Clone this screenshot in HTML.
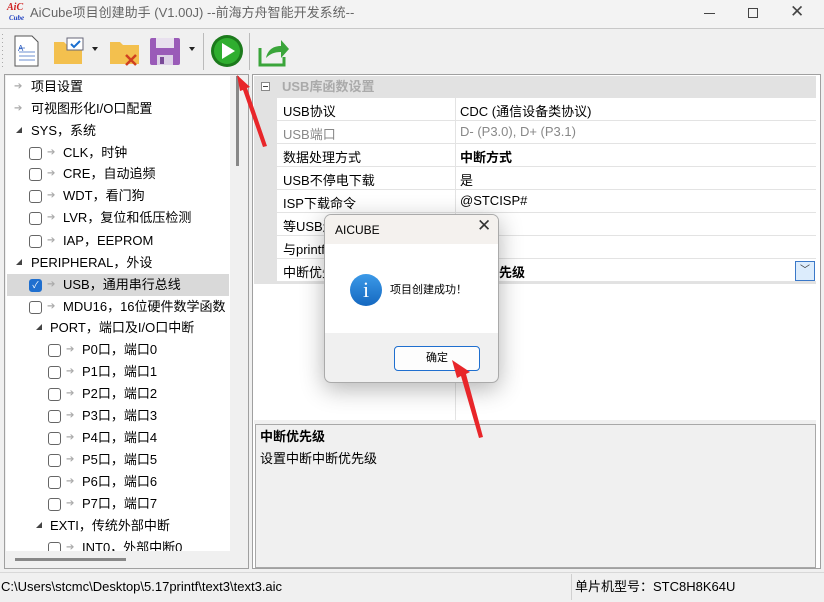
<!DOCTYPE html>
<html><head><meta charset="utf-8"><style>
*{margin:0;padding:0;box-sizing:border-box}
body{width:824px;height:602px;background:#f0f0f0;font-family:"Liberation Sans","Noto Sans CJK SC",sans-serif;font-size:13px;color:#000;position:relative;overflow:hidden}
.a{position:absolute}
.t{position:absolute;white-space:nowrap;line-height:16px}
.cb{position:absolute;width:13px;height:13px;border:1px solid #666;border-radius:3px;background:#fff}
.ar{position:absolute;color:#aaa;font-size:10px;line-height:12px}
.tri{position:absolute;width:0;height:0;border-left:6px solid transparent;border-bottom:6px solid #444}
.row{position:absolute;left:277px;width:539px;height:23px;border-bottom:1px solid #e3e3e3;background:#fff}
.row .n{position:absolute;left:6px;top:3px}
.row .v{position:absolute;left:183px;top:3px}
.row .d{position:absolute;left:178px;top:0;width:1px;height:23px;background:#e3e3e3}
</style></head><body>
<!-- title bar -->
<div class="a" style="left:0;top:0;width:824px;height:29px;background:#f3f3f3;border-bottom:1px solid #c8c8c8"></div>
<div class="t" style="left:7px;top:3px;font:italic bold 10px 'Liberation Serif',serif;color:#d02020;line-height:10px">AiC</div>
<div class="t" style="left:9px;top:14px;font:italic bold 7px 'Liberation Serif',serif;color:#2040c0;line-height:8px">Cube</div>
<div class="t" style="left:30px;top:5px;color:#666">AiCube项目创建助手 (V1.00J) --前海方舟智能开发系统--</div>
<div class="a" style="left:704px;top:13px;width:11px;height:1px;background:#444"></div>
<div class="a" style="left:748px;top:8px;width:10px;height:10px;border:1px solid #444"></div>
<div class="t" style="left:790px;top:4px;font-size:17px;color:#444;font-weight:300">✕</div>
<!-- toolbar -->
<svg class="a" style="left:0;top:30px" width="300" height="44">
<g fill="#aaa"><rect x="2" y="4" width="1" height="1"/><rect x="2" y="8" width="1" height="1"/><rect x="2" y="12" width="1" height="1"/><rect x="2" y="16" width="1" height="1"/><rect x="2" y="20" width="1" height="1"/><rect x="2" y="24" width="1" height="1"/><rect x="2" y="28" width="1" height="1"/><rect x="2" y="32" width="1" height="1"/><rect x="2" y="36" width="1" height="1"/></g>
<path d="M15 6h17l6 6v24H15z" fill="#fff" stroke="#555"/><path d="M19 18h6M19 22h16M19 26h16M19 30h16" stroke="#6b8fd0"/><text x="18" y="21" font-size="8" fill="#2a5bc0" font-family="Liberation Sans">A</text>
<path d="M54 12h10l3 3h15v19H54z" fill="#f3c04e"/><rect x="67" y="8" width="16" height="12" fill="#fff" stroke="#667"/><path d="M71 14l3 3 6-6" stroke="#1a6fd0" stroke-width="2" fill="none"/><path d="M92 17h6l-3 4z" fill="#222"/>
<path d="M110 12h10l3 3h16v19h-29z" fill="#f3c04e"/><path d="M126 25l10 10M136 25l-10 10" stroke="#d04020" stroke-width="2.5"/>
<rect x="150" y="8" width="30" height="27" rx="2" fill="#9a5bb8"/><rect x="156" y="8" width="18" height="10" fill="#e8e0ee"/><rect x="157" y="25" width="16" height="10" fill="#dcd0e6"/><rect x="160" y="27" width="4" height="7" fill="#7a4a98"/><path d="M189 17h6l-3 4z" fill="#222"/>
<line x1="203.5" y1="3" x2="203.5" y2="40" stroke="#bbb"/>
<circle cx="227" cy="21" r="16" fill="#1c7a1c"/><circle cx="227" cy="21" r="13" fill="#2fae2f"/><path d="M222 13v16l13-8z" fill="#fff"/>
<line x1="249.5" y1="3" x2="249.5" y2="40" stroke="#bbb"/>
<path d="M260 18v17h24v-8" fill="none" stroke="#3aa53a" stroke-width="3"/><path d="M266 28c2-9 8-12 15-12v-6l8 9-8 9v-6c-7 0-11 2-15 6z" fill="#3aa53a"/>
</svg>
<!-- left panel -->
<div class="a" style="left:4px;top:74px;width:245px;height:495px;border:1px solid #a0a0a0;background:#f0f0f0"></div>
<div class="a" style="left:6px;top:76px;width:224px;height:475px;background:#fff"></div>
<div class="a" style="left:236px;top:76px;width:3px;height:90px;background:#888"></div>
<div class="a" style="left:15px;top:558px;width:111px;height:3px;background:#888"></div>
<div class="a" style="left:7px;top:274px;width:222px;height:22px;background:#d9d9d9"></div>
<div class="a" style="left:0;top:0;width:230px;height:551px;overflow:hidden">
<div class="ar" style="left:14px;top:81px">➔</div><div class="t" style="left:31px;top:79px">项目设置</div>
<div class="ar" style="left:14px;top:103px">➔</div><div class="t" style="left:31px;top:101px">可视图形化I/O口配置</div>
<div class="tri" style="left:16px;top:127px"></div><div class="t" style="left:31px;top:123px">SYS，系统</div>
<div class="cb" style="left:29px;top:147px"></div><div class="ar" style="left:47px;top:147px">➔</div><div class="t" style="left:63px;top:145px">CLK，时钟</div>
<div class="cb" style="left:29px;top:168px"></div><div class="ar" style="left:47px;top:168px">➔</div><div class="t" style="left:63px;top:166px">CRE，自动追频</div>
<div class="cb" style="left:29px;top:190px"></div><div class="ar" style="left:47px;top:190px">➔</div><div class="t" style="left:63px;top:188px">WDT，看门狗</div>
<div class="cb" style="left:29px;top:212px"></div><div class="ar" style="left:47px;top:212px">➔</div><div class="t" style="left:63px;top:210px">LVR，复位和低压检测</div>
<div class="cb" style="left:29px;top:235px"></div><div class="ar" style="left:47px;top:235px">➔</div><div class="t" style="left:63px;top:233px">IAP，EEPROM</div>
<div class="tri" style="left:16px;top:259px"></div><div class="t" style="left:31px;top:255px">PERIPHERAL，外设</div>
<div class="cb" style="left:29px;top:279px;background:#1f6fcf;border-color:#1f6fcf;color:#fff;font-size:9px;line-height:11px;text-align:center">✓</div><div class="ar" style="left:47px;top:279px">➔</div><div class="t" style="left:63px;top:277px">USB，通用串行总线</div>
<div class="cb" style="left:29px;top:301px"></div><div class="ar" style="left:47px;top:301px">➔</div><div class="t" style="left:63px;top:299px">MDU16，16位硬件数学函数</div>
<div class="tri" style="left:36px;top:324px"></div><div class="t" style="left:50px;top:320px">PORT，端口及I/O口中断</div>
<div class="cb" style="left:48px;top:344px"></div><div class="ar" style="left:66px;top:344px">➔</div><div class="t" style="left:82px;top:342px">P0口，端口0</div>
<div class="cb" style="left:48px;top:366px"></div><div class="ar" style="left:66px;top:366px">➔</div><div class="t" style="left:82px;top:364px">P1口，端口1</div>
<div class="cb" style="left:48px;top:388px"></div><div class="ar" style="left:66px;top:388px">➔</div><div class="t" style="left:82px;top:386px">P2口，端口2</div>
<div class="cb" style="left:48px;top:410px"></div><div class="ar" style="left:66px;top:410px">➔</div><div class="t" style="left:82px;top:408px">P3口，端口3</div>
<div class="cb" style="left:48px;top:432px"></div><div class="ar" style="left:66px;top:432px">➔</div><div class="t" style="left:82px;top:430px">P4口，端口4</div>
<div class="cb" style="left:48px;top:454px"></div><div class="ar" style="left:66px;top:454px">➔</div><div class="t" style="left:82px;top:452px">P5口，端口5</div>
<div class="cb" style="left:48px;top:476px"></div><div class="ar" style="left:66px;top:476px">➔</div><div class="t" style="left:82px;top:474px">P6口，端口6</div>
<div class="cb" style="left:48px;top:498px"></div><div class="ar" style="left:66px;top:498px">➔</div><div class="t" style="left:82px;top:496px">P7口，端口7</div>
<div class="tri" style="left:36px;top:522px"></div><div class="t" style="left:50px;top:518px">EXTI，传统外部中断</div>
<div class="cb" style="left:48px;top:542px"></div><div class="ar" style="left:66px;top:542px">➔</div><div class="t" style="left:82px;top:540px">INT0，外部中断0</div>
</div>
<!-- right panel -->
<div class="a" style="left:252px;top:74px;width:569px;height:495px;border:1px solid #a0a0a0;background:#fff"></div>
<div class="a" style="left:254px;top:76px;width:562px;height:208px;background:#e2e2e2"></div>
<div class="a" style="left:261px;top:82px;width:9px;height:9px;border:1px solid #888;background:#fff"></div><div class="a" style="left:263px;top:86px;width:5px;height:1px;background:#444"></div>
<div class="t" style="left:282px;top:79px;color:#aaa;font-weight:bold">USB库函数设置</div>
<div class="row" style="top:98px"><div class="d"></div><div class="n">USB协议</div><div class="v">CDC (通信设备类协议)</div></div>
<div class="row" style="top:121px;color:#888"><div class="d"></div><div class="n">USB端口</div><div class="v">D- (P3.0), D+ (P3.1)</div></div>
<div class="row" style="top:144px"><div class="d"></div><div class="n">数据处理方式</div><div class="v" style="font-weight:bold">中断方式</div></div>
<div class="row" style="top:167px"><div class="d"></div><div class="n">USB不停电下载</div><div class="v">是</div></div>
<div class="row" style="top:190px"><div class="d"></div><div class="n">ISP下载命令</div><div class="v">@STCISP#</div></div>
<div class="row" style="top:213px"><div class="d"></div><div class="n">等USB连接</div><div class="v">是</div></div>
<div class="row" style="top:236px"><div class="d"></div><div class="n">与printf关联</div><div class="v">是</div></div>
<div class="row" style="top:259px"><div class="d"></div><div class="n">中断优先级</div><div class="v" style="font-weight:bold">最低优先级</div></div>
<div class="a" style="left:795px;top:261px;width:20px;height:20px;border:1px solid #3a78c8;background:#dcecfc;text-align:center;font-size:10px;line-height:18px;color:#333">﹀</div>
<div class="a" style="left:455px;top:283px;width:1px;height:137px;background:#e3e3e3"></div>
<div class="a" style="left:254px;top:420px;width:562px;height:4px;background:#f0f0f0"></div>
<div class="a" style="left:255px;top:424px;width:561px;height:144px;border:1px solid #a8a8a8;background:#f0f0f0"></div>
<div class="t" style="left:260px;top:429px;font-weight:bold">中断优先级</div>
<div class="t" style="left:260px;top:451px">设置中断中断优先级</div>
<!-- status -->
<div class="a" style="left:0;top:572px;width:824px;height:1px;background:#d8d8d8"></div>
<div class="t" style="left:1px;top:579px">C:\Users\stcmc\Desktop\5.17printf\text3\text3.aic</div>
<div class="a" style="left:571px;top:574px;width:1px;height:26px;background:#d0d0d0"></div>
<div class="t" style="left:575px;top:579px">单片机型号：STC8H8K64U</div>
<!-- dialog -->
<div class="a" style="left:324px;top:214px;width:175px;height:169px;border:1px solid #aaa;border-radius:7px;overflow:hidden;box-shadow:0 6px 24px rgba(0,0,0,.3);background:#f0f0f0">
<div class="a" style="left:0;top:0;width:175px;height:29px;background:#f4f1ee"></div>
<div class="t" style="left:10px;top:7px;font-size:12px">AICUBE</div>
<div class="t" style="left:152px;top:3px;font-size:17px;color:#333">✕</div>
<div class="a" style="left:0;top:29px;width:175px;height:89px;background:#fff"></div>
<div class="a" style="left:25px;top:59px;width:32px;height:32px;border-radius:50%;background:linear-gradient(#3c9ae8,#1568c0);color:#fff;text-align:center;font:22px/32px 'Liberation Serif',serif">i</div>
<div class="t" style="left:65px;top:67px;font-size:11px">项目创建成功！</div>
<div class="a" style="left:69px;top:131px;width:86px;height:25px;border:1px solid #1f6fcf;border-radius:4px;background:#fdfdfd;text-align:center;font-size:11px;line-height:23px">确定</div>
</div>
<!-- red arrows -->
<svg class="a" style="left:0;top:0" width="824" height="602">
<path d="M237 75L250 87L247 88L267 146L263 147L243 90L240 91Z" fill="#e8262a"/>
<path d="M452 360L470 372L466 374L483 437L479 438L461 376L457 378Z" fill="#e8262a"/>
</svg>
</body></html>
